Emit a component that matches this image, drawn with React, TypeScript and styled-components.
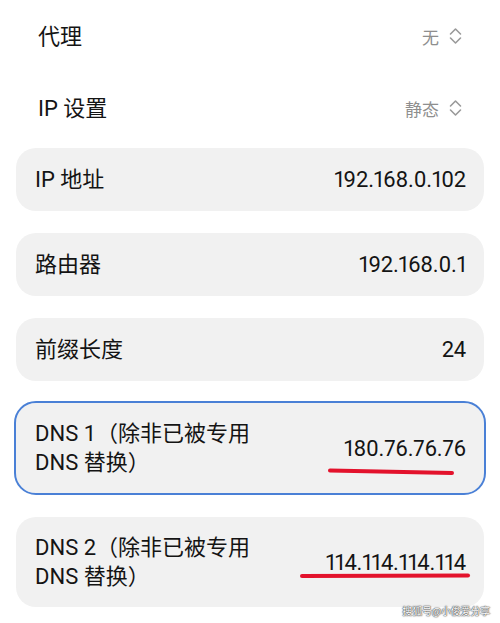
import React from "react";
import styled, { createGlobalStyle } from "styled-components";

const GlobalStyle = createGlobalStyle`
  html, body {
    margin: 0;
    padding: 0;
    background: #ffffff;
  }
  body {
    font-family: Roboto, "Noto Sans", "Noto Sans CJK SC", sans-serif;
    color: #141414;
    -webkit-font-smoothing: antialiased;
  }
`;

const Page = styled.div`
  position: relative;
  width: 500px;
  height: 623px;
  overflow: hidden;
  box-sizing: border-box;
  padding: 0 16px;
  display: flex;
  flex-direction: column;
`;

const PlainRow = styled.div`
  height: 72px;
  display: flex;
  align-items: center;
  justify-content: space-between;
  padding: 0 22px;
`;

const Label = styled.div`
  font-size: 22px;
  line-height: 29px;
  color: #141414;
  font-family: Roboto, "Noto Sans CJK SC", sans-serif;
`;

const Picker = styled.div`
  display: flex;
  align-items: center;
  gap: 10px;
`;

const PickerText = styled.span`
  font-size: 17px;
  color: #8e8e8e;
  font-family: "Noto Sans CJK SC", sans-serif;
`;

const CardList = styled.div`
  margin-top: 4px;
  display: flex;
  flex-direction: column;
  gap: 22px;
`;

const Card = styled.div<{ $active?: boolean; $tall?: boolean }>`
  background: #f1f1f1;
  border-radius: 20px;
  box-sizing: border-box;
  min-height: ${(p) => (p.$tall ? "90px" : "63px")};
  padding: ${(p) => (p.$tall ? "16px 18px 16px 19px" : "0 18px 0 19px")};
  margin-top: ${(p) => (p.$tall && !p.$active ? "2px" : "0")};
  display: flex;
  align-items: center;
  justify-content: space-between;
  outline: ${(p) => (p.$active ? "2px solid #4a80d6" : "none")};
`;

const Value = styled.span`
  position: relative;
  font-size: 22px;
  line-height: 29px;
  color: #141414;
  letter-spacing: -0.2px;
  font-family: Roboto, sans-serif;
  font-variant-numeric: proportional-nums;
  font-feature-settings: "pnum" 1;
`;

const Mark = styled.svg<{ $left: number; $top: number }>`
  position: absolute;
  left: ${(p) => p.$left}px;
  top: ${(p) => p.$top}px;
  overflow: visible;
  pointer-events: none;
`;

const Watermark = styled.div`
  position: absolute;
  right: 10px;
  bottom: 6px;
  font-size: 10px;
  line-height: 12px;
  color: #ffffff;
  font-family: "Noto Sans CJK SC", sans-serif;
  text-shadow: 0 0 1px #444, 0 0 1px #444, 0 0 2px #666;
  letter-spacing: -0.2px;
`;

const Chevrons = () => (
  <svg width="13" height="18" viewBox="0 0 13 18" fill="none">
    <path d="M1.5 7 L6.5 2 L11.5 7" stroke="#9a9a9a" strokeWidth="1.6" strokeLinecap="round" strokeLinejoin="round" />
    <path d="M1.5 11 L6.5 16 L11.5 11" stroke="#9a9a9a" strokeWidth="1.6" strokeLinecap="round" strokeLinejoin="round" />
  </svg>
);

export default function App() {
  return (
    <>
      <GlobalStyle />
      <Page>
        <PlainRow>
          <Label>代理</Label>
          <Picker>
            <PickerText>无</PickerText>
            <Chevrons />
          </Picker>
        </PlainRow>
        <PlainRow>
          <Label>IP 设置</Label>
          <Picker>
            <PickerText>静态</PickerText>
            <Chevrons />
          </Picker>
        </PlainRow>
        <CardList>
          <Card>
            <Label>IP 地址</Label>
            <Value>192.168.0.102</Value>
          </Card>
          <Card>
            <Label>路由器</Label>
            <Value>192.168.0.1</Value>
          </Card>
          <Card>
            <Label>前缀长度</Label>
            <Value>24</Value>
          </Card>
          <Card $active $tall>
            <Label>
              DNS 1（除非已被专用
              <br />
              DNS 替换）
            </Label>
            <Value>
              180.76.76.76
              <Mark $left={-16} $top={35} width="128" height="6">
                <path d="M2 1.5 L124 4" stroke="#e3122c" strokeWidth="4" strokeLinecap="round" />
              </Mark>
            </Value>
          </Card>
          <Card $tall>
            <Label>
              DNS 2（除非已被专用
              <br />
              DNS 替换）
            </Label>
            <Value>
              114.114.114.114
              <Mark $left={-26} $top={25} width="172" height="6">
                <path d="M2 3 L168 2.5" stroke="#e3122c" strokeWidth="4" strokeLinecap="round" />
              </Mark>
            </Value>
          </Card>
        </CardList>
        <Watermark>搜狐号@小俊爱分享</Watermark>
      </Page>
    </>
  );
}
